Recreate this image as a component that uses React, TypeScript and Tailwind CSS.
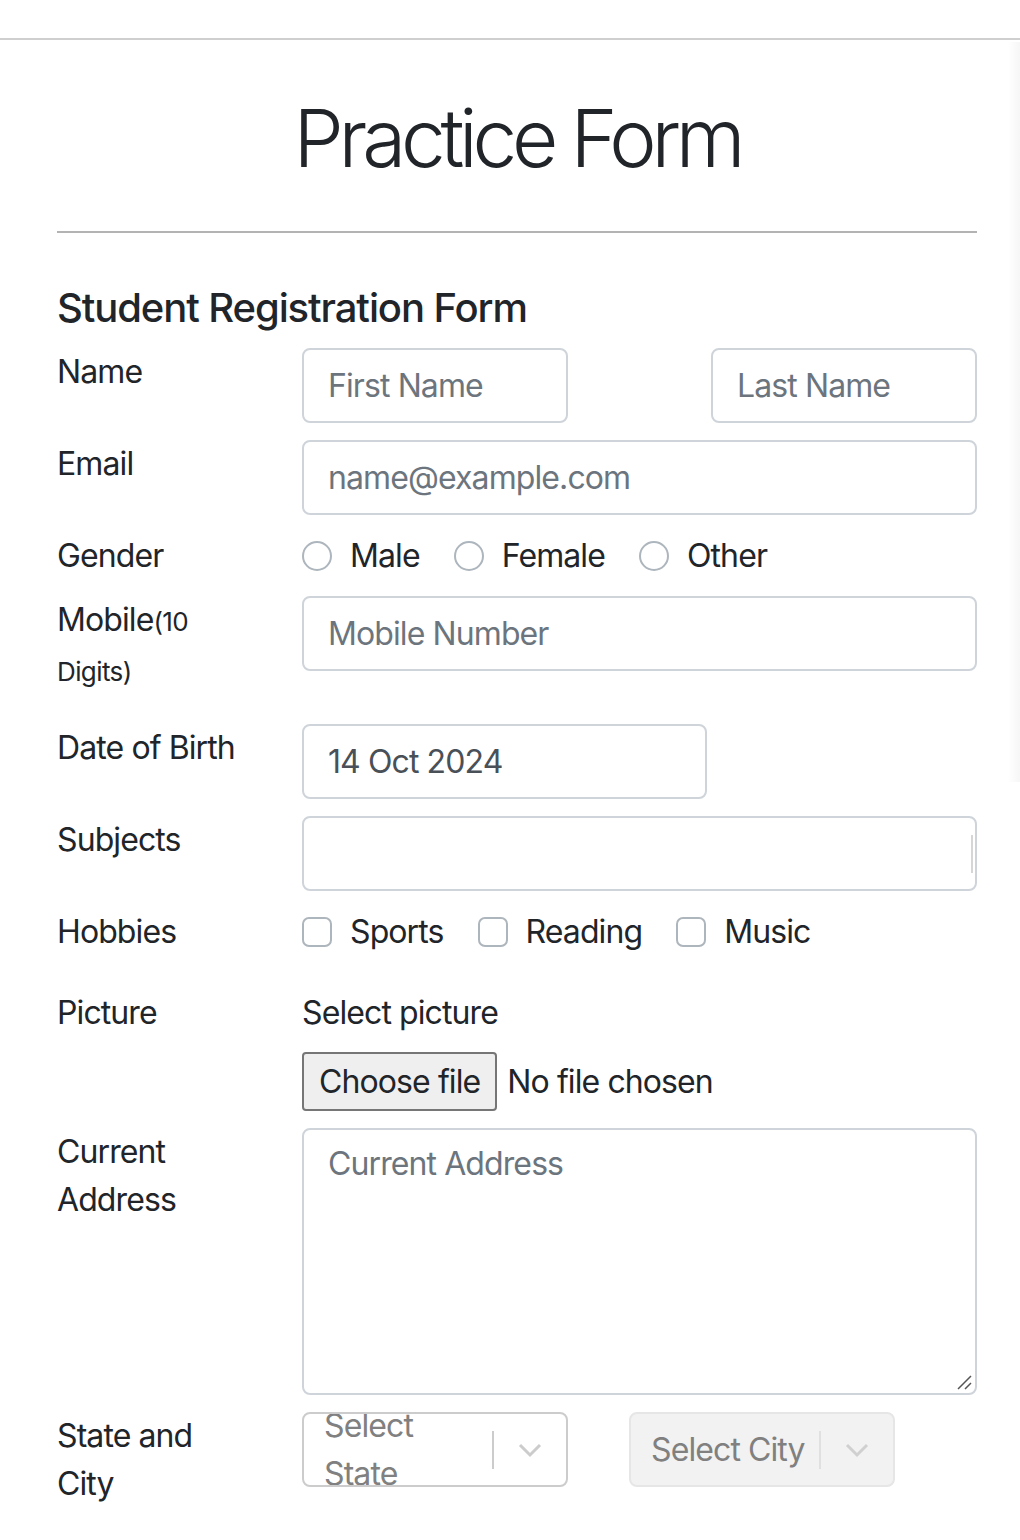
import React from 'react';

const font = { fontFamily: 'Inter, "Noto Sans", sans-serif' };

function Label({ children }: { children: React.ReactNode }) {
  return (
    <div className="w-[245px] shrink-0 pr-[52px] text-[32px] leading-[48px] tracking-[-0.9px] text-[#212529]">
      {children}
    </div>
  );
}

function TextInput({ placeholder, className = '' }: { placeholder: string; className?: string }) {
  return (
    <div
      className={`h-[75px] flex items-center px-[24px] border-2 border-[#ced4da] rounded-[8px] text-[32px] tracking-[-0.9px] text-[#6c757d] ${className}`}
    >
      {placeholder}
    </div>
  );
}

function Radio({ label }: { label: string }) {
  return (
    <div className="flex items-center mr-[34px]">
      <span className="w-[30px] h-[30px] rounded-full border-2 border-[#adb5bd] bg-white" />
      <span className="ml-[18px]">{label}</span>
    </div>
  );
}

function Check({ label }: { label: string }) {
  return (
    <div className="flex items-center mr-[34px]">
      <span className="w-[30px] h-[30px] rounded-[7px] border-2 border-[#adb5bd] bg-white" />
      <span className="ml-[18px]">{label}</span>
    </div>
  );
}

function Chevron({ color }: { color: string }) {
  return (
    <svg width="26" height="16" viewBox="0 0 26 16" fill="none">
      <path d="M3 3l10 10 10-10" stroke={color} strokeWidth="3" />
    </svg>
  );
}

export default function App() {
  return (
    <div className="relative bg-white min-h-[1540px] w-[1020px] overflow-hidden" style={font}>
      <div className="h-[40px] border-b-2 border-[#cfcfcf]" />
      {/* faint shade along the right edge */}
      <div className="absolute right-0 top-[42px] w-[12px] h-[740px] bg-gradient-to-r from-white to-[#f6f6f6]" />
      <div className="pl-[57px] pr-[43px] text-[#212529]">
        <h1 className="text-center text-[80px] font-light leading-none pt-[58px] pb-[53px] tracking-[-5.2px]">
          Practice Form
        </h1>
        <div className="h-[2px] bg-[#b3b3b3]" />
        <h5 className="text-[40px] font-medium leading-[48px] mt-[51px] tracking-[-1.1px]">Student Registration Form</h5>

        <div className="flex mt-[16px]">
          <Label>Name</Label>
          <div className="flex-1 flex justify-between">
            <TextInput placeholder="First Name" className="w-[266px]" />
            <TextInput placeholder="Last Name" className="w-[266px]" />
          </div>
        </div>

        <div className="flex mt-[17px]">
          <Label>Email</Label>
          <TextInput placeholder="name@example.com" className="flex-1" />
        </div>

        <div className="flex mt-[17px] h-[48px]">
          <Label>Gender</Label>
          <div className="flex items-center text-[32px] tracking-[-0.9px]">
            <Radio label="Male" />
            <Radio label="Female" />
            <Radio label="Other" />
          </div>
        </div>

        <div className="flex mt-[16px]">
          <Label>
            Mobile<span className="text-[26px] tracking-[-0.6px]">(10 Digits)</span>
          </Label>
          <TextInput placeholder="Mobile Number" className="flex-1" />
        </div>

        <div className="flex mt-[28px]">
          <Label>Date of Birth</Label>
          <div className="h-[75px] w-[405px] flex items-center px-[24px] border-2 border-[#ced4da] rounded-[8px] text-[32px] tracking-[-0.9px] text-[#495057]">
            14 Oct 2024
          </div>
        </div>

        <div className="flex mt-[17px]">
          <Label>Subjects</Label>
          <div className="flex-1 h-[75px] border-2 border-[#ced4da] rounded-[8px] flex items-center justify-end pr-[2px]">
            <div className="w-[2px] h-[38px] bg-[#d6d6d6]" />
          </div>
        </div>

        <div className="flex mt-[17px] h-[48px]">
          <Label>Hobbies</Label>
          <div className="flex items-center text-[32px] tracking-[-0.9px]">
            <Check label="Sports" />
            <Check label="Reading" />
            <Check label="Music" />
          </div>
        </div>

        <div className="flex mt-[33px]">
          <Label>Picture</Label>
          <div className="flex flex-col text-[32px] tracking-[-0.9px]">
            <div className="leading-[48px]">Select picture</div>
            <div className="flex items-center mt-[15px]">
              <div className="h-[59px] px-[15px] flex items-center bg-[#efefef] border-2 border-[#767676] rounded-[4px]">
                Choose file
              </div>
              <span className="ml-[10px]">No file chosen</span>
            </div>
          </div>
        </div>

        <div className="flex mt-[17px]">
          <Label>Current Address</Label>
          <div className="relative flex-1 h-[267px] border-2 border-[#ced4da] rounded-[8px] px-[24px] pt-[10px] text-[32px] leading-[48px] tracking-[-0.9px] text-[#6c757d]">
            Current Address
            <svg className="absolute right-[3px] bottom-[3px]" width="16" height="16" viewBox="0 0 16 16">
              <path d="M15 2L2 15M15 9L9 15" stroke="#555" strokeWidth="1.5" />
            </svg>
          </div>
        </div>

        <div className="flex mt-[17px]">
          <Label>State and City</Label>
          <div className="flex">
            <div className="w-[266px] h-[75px] border-2 border-[#cccccc] rounded-[8px] flex items-center overflow-hidden">
              <div className="flex-1 pl-[20px] text-[32px] leading-[48px] tracking-[-0.9px] text-[#808080]">Select State</div>
              <div className="w-[2px] h-[38px] bg-[#cccccc]" />
              <div className="w-[72px] flex justify-center">
                <Chevron color="#cccccc" />
              </div>
            </div>
            <div className="ml-[61px] w-[266px] h-[75px] border-2 border-[#e6e6e6] bg-[#f2f2f2] rounded-[8px] flex items-center">
              <div className="flex-1 pl-[20px] text-[32px] tracking-[-0.9px] text-[#808080] whitespace-nowrap">Select City</div>
              <div className="w-[2px] h-[38px] bg-[#e0e0e0]" />
              <div className="w-[72px] flex justify-center">
                <Chevron color="#d0d0d0" />
              </div>
            </div>
          </div>
        </div>
      </div>
    </div>
  );
}
